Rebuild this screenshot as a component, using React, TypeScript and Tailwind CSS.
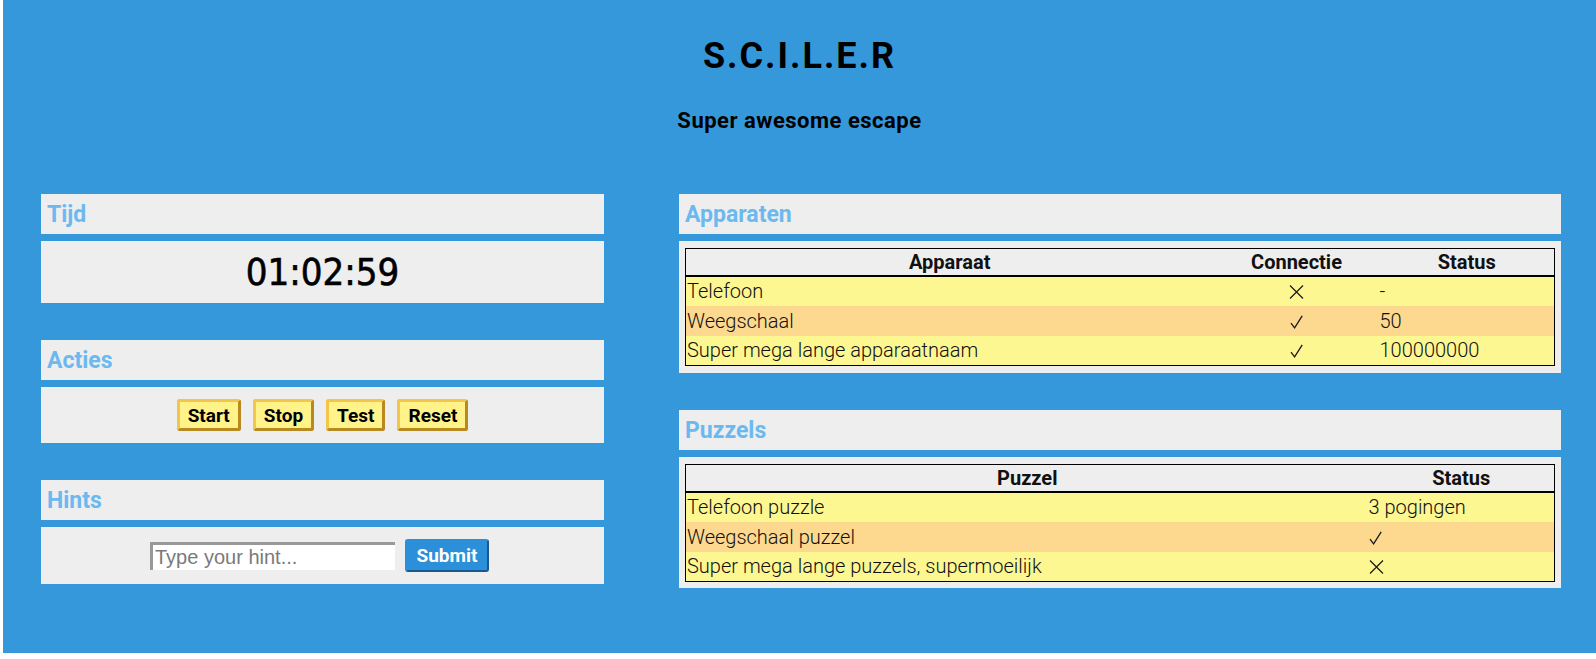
import { useState } from "react";

const DEVICES = [
  { name: "Telefoon", connected: false, status: "-" },
  { name: "Weegschaal", connected: true, status: "50" },
  { name: "Super mega lange apparaatnaam", connected: true, status: "100000000" },
];

const PUZZLES = [
  { name: "Telefoon puzzle", status: "3 pogingen" },
  { name: "Weegschaal puzzel", status: "✓" },
  { name: "Super mega lange puzzels, supermoeilijk", status: "×" },
];

const ACTIONS = ["Start", "Stop", "Test", "Reset"];

function rowColor(i: number) {
  return i % 2 === 1 ? "bg-[#fcd98f]" : "bg-[#fdf792]";
}

function PanelHeader({ title }: { title: string }) {
  return (
    <div className="h-[40px] bg-[#eeeeee] flex items-center pl-[6px]">
      <h2 className="text-[23px] font-bold text-[#6cb9f0] leading-none">{title}</h2>
    </div>
  );
}

function Mark({ value }: { value: string }) {
  if (value === "×") {
    return (
      <svg width="15" height="14" viewBox="0 0 15 14" className="inline-block align-[-1px]" aria-label="×">
        <path d="M1 0.5 L14 13.5 M14 0.5 L1 13.5" fill="none" stroke="#1a1a1a" strokeWidth="1.2" />
      </svg>
    );
  }
  if (value === "✓") {
    return (
      <svg width="13" height="14" viewBox="0 0 13 14" className="inline-block align-[-1px]" aria-label="✓">
        <path d="M1 8.2 L4.6 12.8 L12.2 0.8" fill="none" stroke="#1a1a1a" strokeWidth="1.3" strokeLinejoin="miter" />
      </svg>
    );
  }
  return <span>{value}</span>;
}

export default function App() {
  const [hint, setHint] = useState("");

  return (
    <div className="min-h-screen bg-white font-[Roboto,sans-serif] text-[#111]">
      <div className="ml-[3px] h-[653px] bg-[#3598db]">
        {/* Title */}
        <div className="pt-[32px] text-center">
          <h1 className="text-[36px] font-bold tracking-[2px] leading-[48px] text-black">S.C.I.L.E.R</h1>
          <p className="mt-[27px] text-[22px] font-bold tracking-[0.5px] leading-[28px] text-black">
            Super awesome escape
          </p>
        </div>

        <div className="flex mt-[59px]">
          {/* Left column */}
          <div className="w-[563px] ml-[38px] flex flex-col gap-[37px]">
            <section className="flex flex-col gap-[7px]">
              <PanelHeader title="Tijd" />
              <div className="h-[62px] bg-[#eeeeee] flex items-center justify-center">
                <span className="text-[38px] font-['DejaVu_Sans',sans-serif] font-stretch-condensed leading-none text-black [-webkit-text-stroke:0.6px_black]">
                  01:02:59
                </span>
              </div>
            </section>

            <section className="flex flex-col gap-[7px]">
              <PanelHeader title="Acties" />
              <div className="h-[56px] bg-[#eeeeee] flex items-center justify-center gap-[12px]">
                {ACTIONS.map((a) => (
                  <button
                    key={a}
                    className="h-[32px] px-[8px] rounded-[3px] bg-[#fff38a] border-[3px] border-t-[#f3c54a] border-l-[#f3c54a] border-b-[#b8891f] border-r-[#b8891f] text-[19px] font-bold text-black leading-none"
                  >
                    {a}
                  </button>
                ))}
              </div>
            </section>

            <section className="flex flex-col gap-[7px]">
              <PanelHeader title="Hints" />
              <div className="h-[57px] bg-[#eeeeee] flex items-center justify-center gap-[10px] pr-[6px]">
                <input
                  value={hint}
                  onChange={(e) => setHint(e.target.value)}
                  placeholder="Type your hint..."
                  className="w-[245px] h-[28px] bg-white border-t-[3px] border-l-[3px] border-[#999] border-b-0 border-r-0 px-[2px] text-[20px] font-['Liberation_Sans',sans-serif] placeholder:text-[#7a7a7a] outline-none"
                />
                <button className="h-[33px] w-[84px] rounded-[3px] bg-[#2b8fd9] border-[2px] border-t-[#2b8fd9] border-l-[#2b8fd9] border-b-[#17588f] border-r-[#17588f] text-[19px] font-bold text-white leading-none">
                  Submit
                </button>
              </div>
            </section>
          </div>

          {/* Right column */}
          <div className="w-[882px] ml-[75px] flex flex-col gap-[37px]">
            <section className="flex flex-col gap-[7px]">
              <PanelHeader title="Apparaten" />
              <div className="bg-[#eeeeee] pt-[7px] pb-[7px] pl-[6px] pr-[6px]">
                <table className="w-full border-collapse border border-black text-[20px] font-light leading-[22px]">
                  <thead>
                    <tr className="h-[27px] border-b-[2px] border-black">
                      <th className="w-[528px] p-0 font-bold text-[20px] text-center">Apparaat</th>
                      <th className="w-[166px] p-0 font-bold text-[20px] text-center">Connectie</th>
                      <th className="p-0 font-bold text-[20px] text-center">Status</th>
                    </tr>
                  </thead>
                  <tbody>
                    {DEVICES.map((d, i) => (
                      <tr key={d.name} className={`h-[30px] ${rowColor(i)}`}>
                        <td className="p-0 pl-[1px] text-left">{d.name}</td>
                        <td className="p-0 text-center">
                          <Mark value={d.connected ? "✓" : "×"} />
                        </td>
                        <td className="p-0 text-left">{d.status}</td>
                      </tr>
                    ))}
                  </tbody>
                </table>
              </div>
            </section>

            <section className="flex flex-col gap-[7px]">
              <PanelHeader title="Puzzels" />
              <div className="bg-[#eeeeee] pt-[7px] pb-[6px] pl-[6px] pr-[6px]">
                <table className="w-full border-collapse border border-black text-[20px] font-light leading-[22px]">
                  <thead>
                    <tr className="h-[27px] border-b-[2px] border-black">
                      <th className="w-[683px] p-0 font-bold text-[20px] text-center">Puzzel</th>
                      <th className="p-0 font-bold text-[20px] text-center">Status</th>
                    </tr>
                  </thead>
                  <tbody>
                    {PUZZLES.map((p, i) => (
                      <tr key={p.name} className={`h-[30px] ${rowColor(i)}`}>
                        <td className="p-0 pl-[1px] text-left">{p.name}</td>
                        <td className="p-0 text-left">
                          <Mark value={p.status} />
                        </td>
                      </tr>
                    ))}
                  </tbody>
                </table>
              </div>
            </section>
          </div>
        </div>
      </div>
    </div>
  );
}
